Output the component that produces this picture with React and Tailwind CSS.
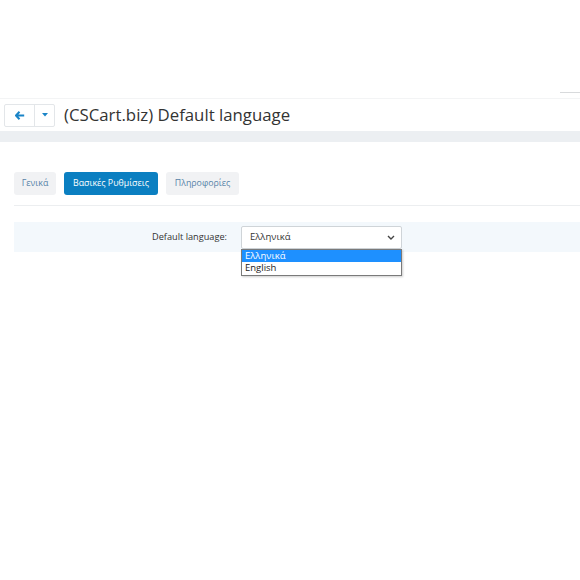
import React from 'react';

const font = { fontFamily: '"Open Sans", "DejaVu Sans", sans-serif' };

const tabs = [
    { label: 'Γενικά', active: false, w: 'w-[42px]' },
    { label: 'Βασικές Ρυθμίσεις', active: true, w: 'w-[94px]' },
    { label: 'Πληροφορίες', active: false, w: 'w-[73px]' },
];

const App = () => {
    return (
        <div className="w-[580px] h-[580px] bg-white overflow-hidden" style={font}>
            {/* top strip */}
            <div className="h-[98px] relative">
                <div className="absolute right-0 top-[92px] w-[20px] h-px bg-[#d8dadc]" />
            </div>

            {/* page header */}
            <div className="h-[33px] flex items-center border-t border-[#f3f4f5] bg-white">
                <div className="ml-[4px] flex h-[23px] border border-[#e3e6e9] rounded-[2px] bg-white">
                    <button className="w-[30px] flex items-center justify-center border-r border-[#e3e6e9]">
                        <svg width="10" height="9" viewBox="0 0 10 9">
                            <path d="M4.5 0.8 L1 4.5 L4.5 8.2 M1.2 4.5 H9.2" stroke="#1a84c7" strokeWidth="2" fill="none" strokeLinejoin="round" />
                        </svg>
                    </button>
                    <button className="w-[19px] flex items-center justify-center">
                        <svg width="6" height="4" viewBox="0 0 6 4">
                            <path d="M0 0 H6 L3 3.5 Z" fill="#1a84c7" />
                        </svg>
                    </button>
                </div>
                <h1 className="ml-[9px] text-[16.8px] text-[#333] leading-none">(CSCart.biz) Default language</h1>
            </div>
            <div className="h-[11px] bg-[#eceff2]" />

            {/* tabs */}
            <div className="pl-[14px] mt-[30px] flex gap-[8px]">
                {tabs.map((t) => (
                    <div
                        key={t.label}
                        className={
                            t.active
                                ? `${t.w} h-[23px] flex items-center justify-center rounded-[3px] bg-[#0b7fc1] text-white text-[8.8px] leading-none`
                                : `${t.w} h-[23px] flex items-center justify-center rounded-[3px] bg-[#f1f2f4] text-[#5683a8] text-[8.8px] leading-none`
                        }
                    >
                        {t.label}
                    </div>
                ))}
            </div>
            <div className="ml-[14px] mt-[10px] h-px bg-[#eceef0]" />

            {/* setting row */}
            <div className="ml-[14px] mt-[16px] h-[30px] bg-[#f3f8fc] flex items-center">
                <div className="w-[213px] text-right text-[9.2px] text-[#333] leading-none">Default language:</div>
                <div className="relative ml-[14px]">
                    <div className="w-[161px] h-[23px] border border-[#cfd4d8] rounded-[2px] bg-white flex items-center justify-between pl-[8px] pr-[6px]">
                        <span className="text-[9.5px] text-[#333] leading-none">Ελληνικά</span>
                        <svg width="8" height="5" viewBox="0 0 8 5">
                            <path d="M1 1 L4 4 L7 1" stroke="#444" strokeWidth="1.4" fill="none" />
                        </svg>
                    </div>
                    {/* open option list */}
                    <div className="absolute left-0 top-[23px] w-[161px] border border-[#7a7a7a] bg-white shadow-[1px_1px_2px_rgba(0,0,0,0.2)]">
                        <div className="h-[12px] bg-[#1e90ff] text-white text-[9.5px] leading-none flex items-center pl-[3px]">Ελληνικά</div>
                        <div className="h-[13px] text-[#222] text-[9.5px] leading-none flex items-center pl-[3px]">English</div>
                    </div>
                </div>
            </div>
        </div>
    );
};

export default App;
